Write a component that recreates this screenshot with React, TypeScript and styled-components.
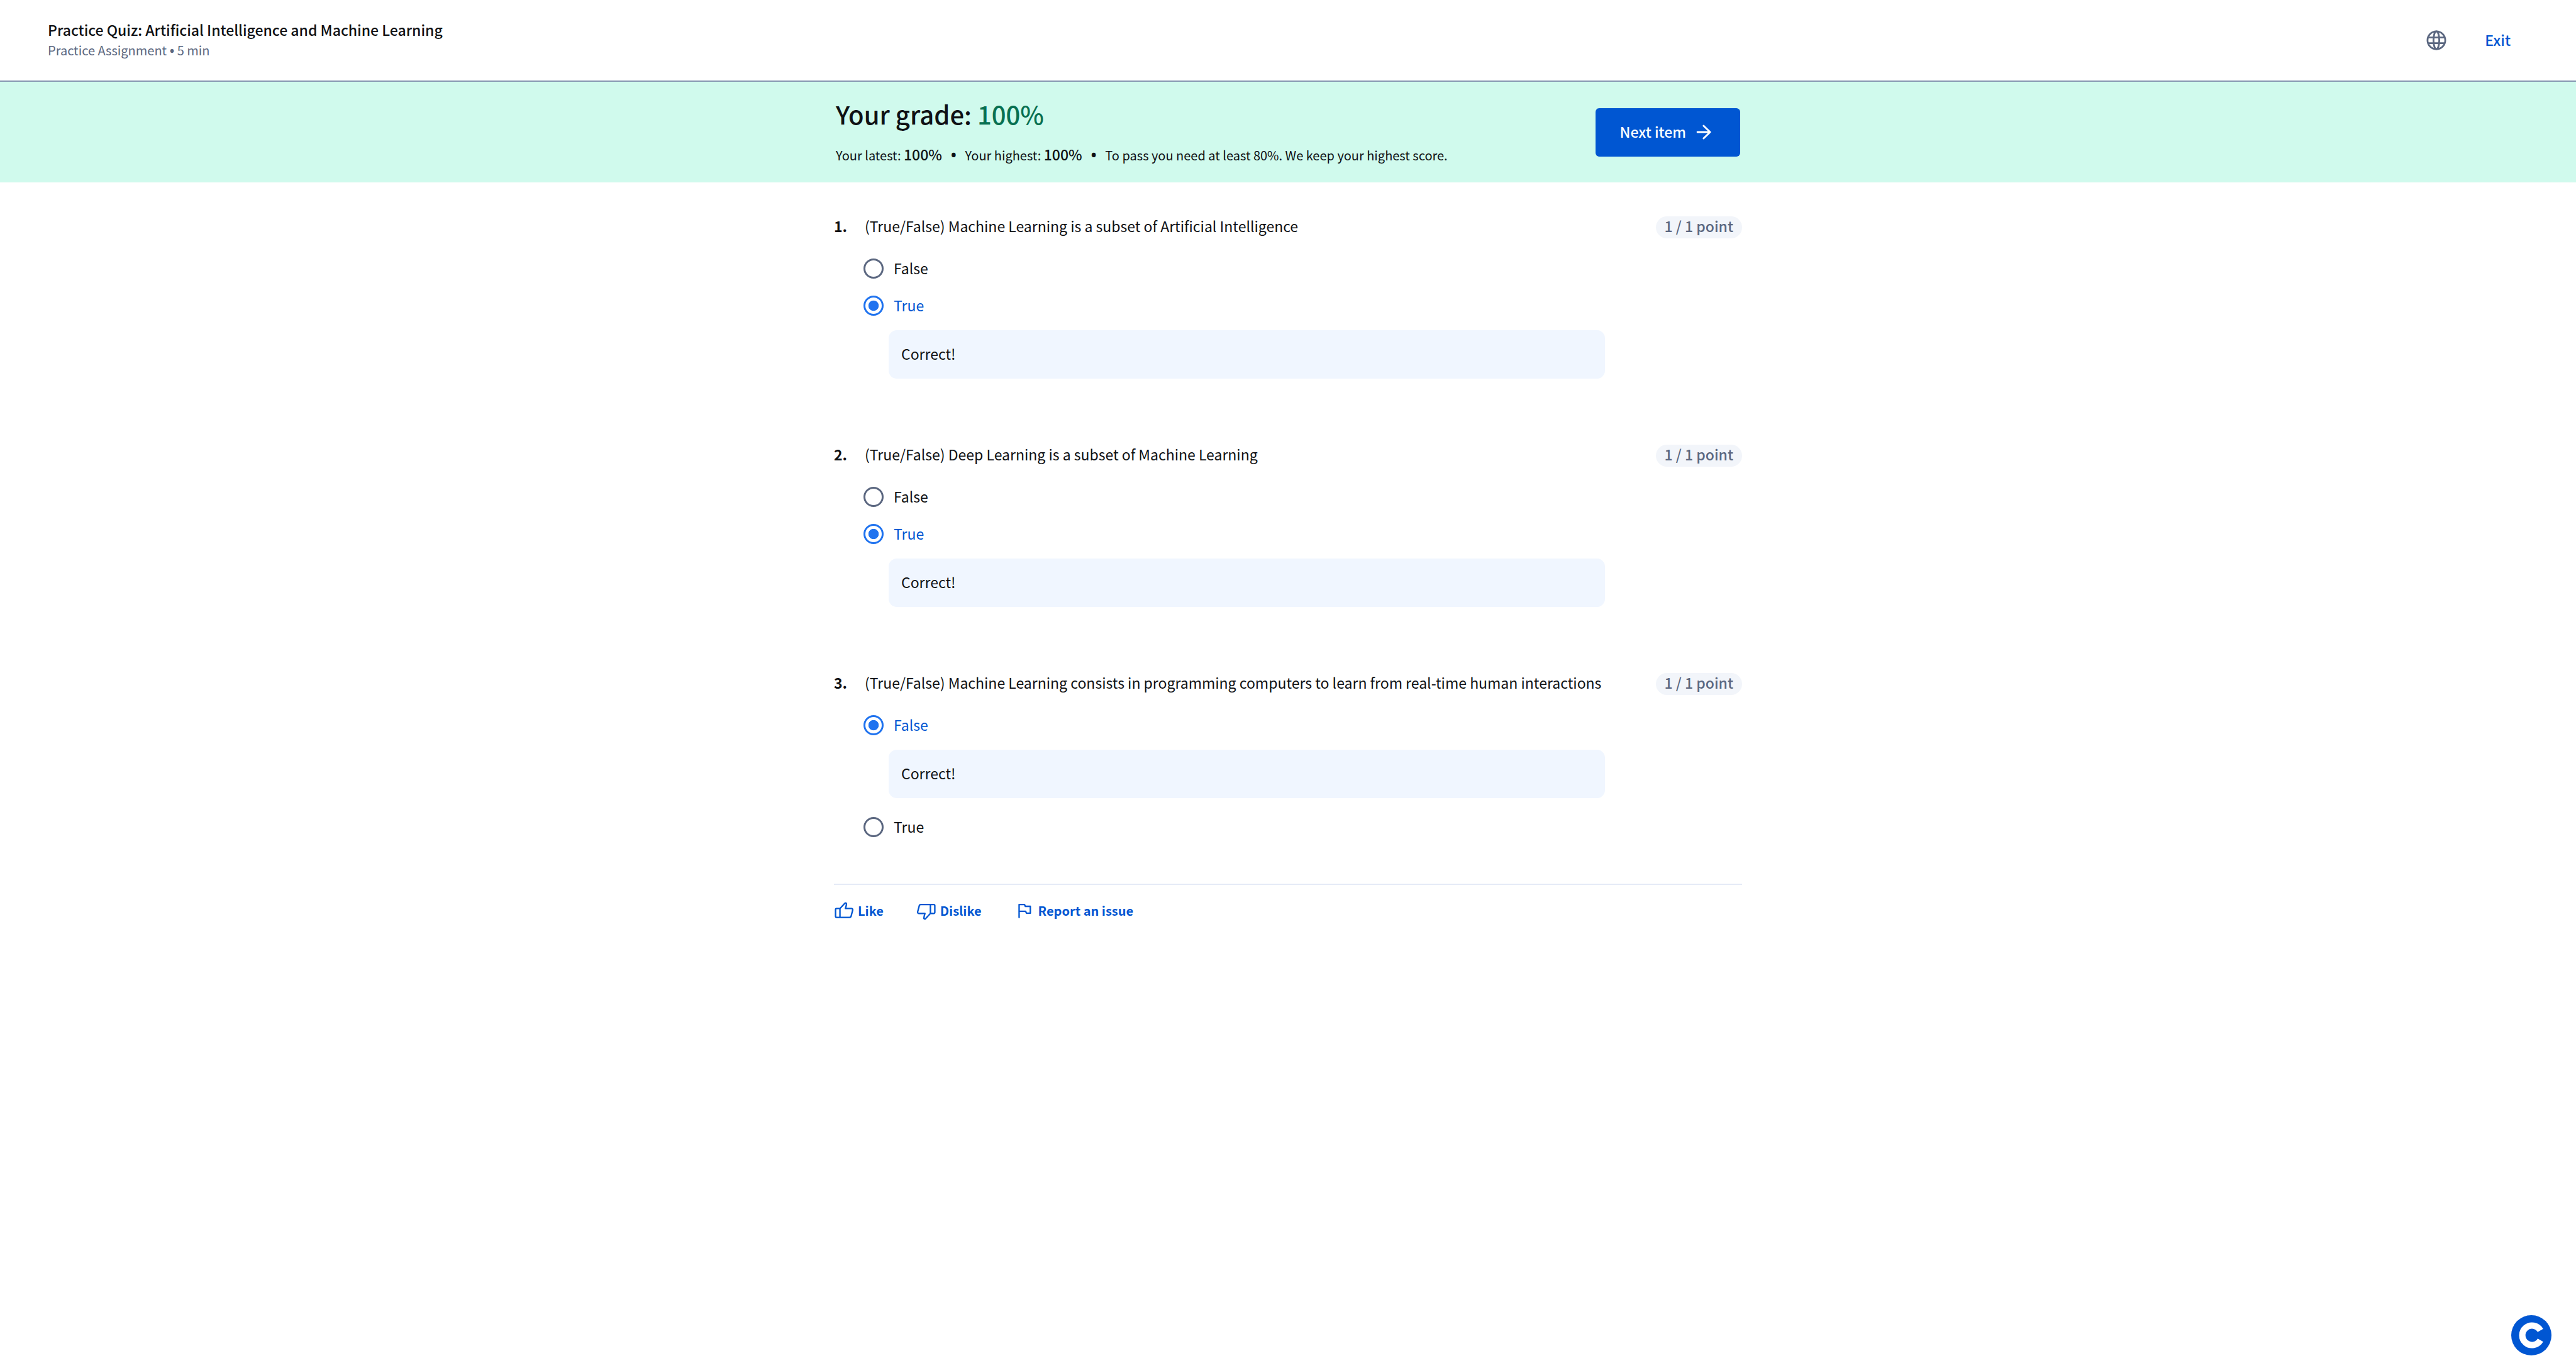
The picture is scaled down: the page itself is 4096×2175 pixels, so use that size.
import React from 'react';
import styled, { createGlobalStyle } from 'styled-components';

const color = {
  ink: '#0f1114',
  muted: '#5b6780',
  primary: '#0056d2',
  control: '#2073ef',
  success: '#087051',
  banner: '#d0faed',
  rule: '#8495b0',
  divider: '#e5ebf7',
  feedback: '#f0f6ff',
  badge: '#f2f5fa',
};

const GlobalStyle = createGlobalStyle`
  *, *::before, *::after { box-sizing: border-box; }
  body {
    margin: 0;
    background: #fff;
    color: ${color.ink};
    font-family: "Noto Sans CJK SC", "Open Sans", sans-serif;
    font-size: 23px;
    line-height: 31px;
  }
  button { font: inherit; border: 0; background: none; padding: 0; cursor: pointer; }
`;

const Header = styled.header`
  display: flex;
  align-items: center;
  justify-content: space-between;
  padding: 31px 104px 31px 76px;
  border-bottom: 2px solid ${color.rule};
`;

const Title = styled.h1`
  margin: 0;
  font-size: 23px;
  font-weight: 500;
  line-height: 32px;
`;

const Subtitle = styled.p`
  margin: 0;
  color: ${color.muted};
  font-size: 20px;
  line-height: 34px;
`;

const Bullet = styled.span`
  font-family: "Open Sans", sans-serif;
  font-weight: 700;
  line-height: 1;
`;

const HeaderActions = styled.div`
  display: flex;
  align-items: center;
  gap: 58px;
`;

const IconButton = styled.button`
  display: flex;
  color: ${color.muted};
`;

const Label = styled.span`
  padding-bottom: 2px;
`;

const TextButton = styled.button`
  display: flex;
  color: ${color.primary};
  font-weight: 500;
`;

const Banner = styled.section`
  padding: 27px 0;
  background: ${color.banner};
`;

const Column = styled.div`
  max-width: 1444px;
  margin: 0 auto;
`;

const BannerRow = styled(Column)`
  display: flex;
  align-items: center;
  justify-content: space-between;
  padding: 0 3px;
`;

const GradeTitle = styled.h2`
  margin: 0 0 26px;
  font-size: 40px;
  font-weight: 500;
  line-height: 48px;
`;

const GradeValue = styled.span`
  color: ${color.success};
`;

const Stats = styled.div`
  display: flex;
  align-items: baseline;
  gap: 14px;
  font-size: 20px;
  line-height: 32px;

  strong {
    font-size: 23px;
    font-weight: 500;
    line-height: 1;
  }

  ${Bullet} {
    font-size: 23px;
  }
`;

const NextButton = styled.button`
  display: flex;
  align-items: center;
  gap: 12px;
  height: 77px;
  padding: 0 42px 0 39px;
  border-radius: 6px;
  background: ${color.primary};
  color: #fff;
  font-weight: 500;
`;

const Main = styled(Column).attrs({ as: 'main' })`
  padding-top: 54px;
`;

const Questions = styled.div`
  display: grid;
  gap: 102px;
`;

const Question = styled.section`
  display: grid;
  grid-template-columns: 47px 1fr 218px;
`;

const Number = styled.span`
  font-weight: 700;
`;

const Prompt = styled.p`
  margin: 0 0 32px;
  padding: 0 0 4px 2px;
`;

const Badge = styled.span`
  justify-self: end;
  align-self: start;
  padding: 0 14px 4px;
  border-radius: 18px;
  background: ${color.badge};
  color: ${color.muted};
  font-weight: 500;
`;

const Options = styled.div`
  display: grid;
  gap: 27px;
`;

const OptionLabel = styled.label<{ $on: boolean }>`
  display: flex;
  align-items: center;
  gap: 16px;
  height: 32px;
  color: ${(p) => (p.$on ? color.primary : color.ink)};
`;

const Radio = styled.input`
  appearance: none;
  flex: none;
  width: 32px;
  height: 32px;
  margin: 0;
  border: 3px solid ${color.muted};
  border-radius: 50%;

  &:checked {
    border-color: ${color.control};
    background: radial-gradient(circle closest-side, ${color.control} 60%, transparent 66%);
  }
`;

const Feedback = styled.div`
  margin: 23px 0 3px 40px;
  padding: 22px 20px 24px;
  border-radius: 13px;
  background: ${color.feedback};
`;

const Footer = styled.footer`
  display: flex;
  gap: 52px;
  margin-top: 74px;
  padding-top: 26px;
  border-top: 2px solid ${color.divider};
`;

const FooterButton = styled.button`
  display: flex;
  align-items: center;
  gap: 6px;
  height: 32px;
  color: ${color.primary};
  font-size: 20px;
  font-weight: 700;
  line-height: 24px;
`;

const ChatButton = styled.button`
  position: fixed;
  right: 39px;
  bottom: 20px;
  display: flex;
`;

const Globe = () => (
  <svg width="38" height="38" viewBox="0 0 38 38" fill="none" stroke="currentColor" strokeWidth="2.8" aria-hidden="true">
    <circle cx="19" cy="19" r="14.1" />
    <ellipse cx="19" cy="19" rx="4.6" ry="14.1" />
    <path d="M5.6 14.6H32.4M5.6 23.6H32.4" />
  </svg>
);

const Arrow = () => (
  <svg width="32" height="32" viewBox="0 0 40 40" fill="none" stroke="currentColor" strokeWidth="3.6" strokeLinecap="round" strokeLinejoin="round" aria-hidden="true">
    <path d="M7.6 20H32.5M19.8 7.6L32.7 20L19.8 32.4" />
  </svg>
);

const thumb =
  'M12 14.3L21.8 3.8Q23.4 2.7 24.8 4.2Q25.2 7 22.8 14.3H35Q38 14.6 37.2 18L34 30Q33.3 32 31 32H5.5Q3.2 32 3.2 29.7V16.8Q3.2 14.3 5.5 14.3ZM12 14.3V32';

const FooterIcon = ({ kind }: { kind: 'like' | 'dislike' | 'flag' }) => (
  <svg width="32" height="32" viewBox="0 0 40 40" fill="none" stroke="currentColor" strokeWidth="2.9" strokeLinecap="round" strokeLinejoin="round" aria-hidden="true">
    {kind === 'like' && <path d={thumb} />}
    {kind === 'dislike' && <path d={thumb} transform="rotate(180 20 19.2)" />}
    {kind === 'flag' && <path d="M9.3 32.2V6.3H20L21.6 10H31.6V23.7H24L22.2 19.8H9.3" />}
  </svg>
);

const Logo = () => (
  <svg width="64" height="64" viewBox="0 0 240 240" fill="none" aria-hidden="true">
    <circle cx="120" cy="120" r="120" fill="#0056d2" />
    <path d="M174.2 91A58 58 0 1 0 174.2 149" stroke="#fff" strokeWidth="38" />
  </svg>
);

const questions = [
  { text: '(True/False) Machine Learning is a subset of Artificial Intelligence', answer: 'True' },
  { text: '(True/False) Deep Learning is a subset of Machine Learning', answer: 'True' },
  {
    text: '(True/False) Machine Learning consists in programming computers to learn from real-time human interactions',
    answer: 'False',
  },
];

export default function App() {
  return (
    <>
      <GlobalStyle />
      <Header>
        <div>
          <Title>Practice Quiz: Artificial Intelligence and Machine Learning</Title>
          <Subtitle>
            Practice Assignment <Bullet>•</Bullet> 5 min
          </Subtitle>
        </div>
        <HeaderActions>
          <IconButton type="button" aria-label="Language">
            <Globe />
          </IconButton>
          <TextButton type="button">
            <Label>Exit</Label>
          </TextButton>
        </HeaderActions>
      </Header>
      <Banner>
        <BannerRow>
          <div>
            <GradeTitle>
              Your grade: <GradeValue>100%</GradeValue>
            </GradeTitle>
            <Stats>
              <span>
                Your latest: <strong>100%</strong>
              </span>
              <Bullet>•</Bullet>
              <span>
                Your highest: <strong>100%</strong>
              </span>
              <Bullet>•</Bullet>
              <span>To pass you need at least 80%. We keep your highest score.</span>
            </Stats>
          </div>
          <NextButton type="button">
            <Label>Next item</Label>
            <Arrow />
          </NextButton>
        </BannerRow>
      </Banner>
      <Main>
        <Questions>
          {questions.map((q, i) => (
            <Question key={q.text}>
              <Number>{i + 1}.</Number>
              <div>
                <Prompt>{q.text}</Prompt>
                <Options role="radiogroup" aria-label={q.text}>
                  {['False', 'True'].map((option) => (
                    <div key={option}>
                      <OptionLabel $on={option === q.answer}>
                        <Radio type="radio" name={`question-${i}`} defaultChecked={option === q.answer} />
                        <Label>{option}</Label>
                      </OptionLabel>
                      {option === q.answer && <Feedback>Correct!</Feedback>}
                    </div>
                  ))}
                </Options>
              </div>
              <Badge>1 / 1 point</Badge>
            </Question>
          ))}
        </Questions>
        <Footer>
          <FooterButton type="button">
            <FooterIcon kind="like" />
            <Label>Like</Label>
          </FooterButton>
          <FooterButton type="button">
            <FooterIcon kind="dislike" />
            <Label>Dislike</Label>
          </FooterButton>
          <FooterButton type="button">
            <FooterIcon kind="flag" />
            <Label>Report an issue</Label>
          </FooterButton>
        </Footer>
      </Main>
      <ChatButton type="button" aria-label="Open assistant">
        <Logo />
      </ChatButton>
    </>
  );
}
